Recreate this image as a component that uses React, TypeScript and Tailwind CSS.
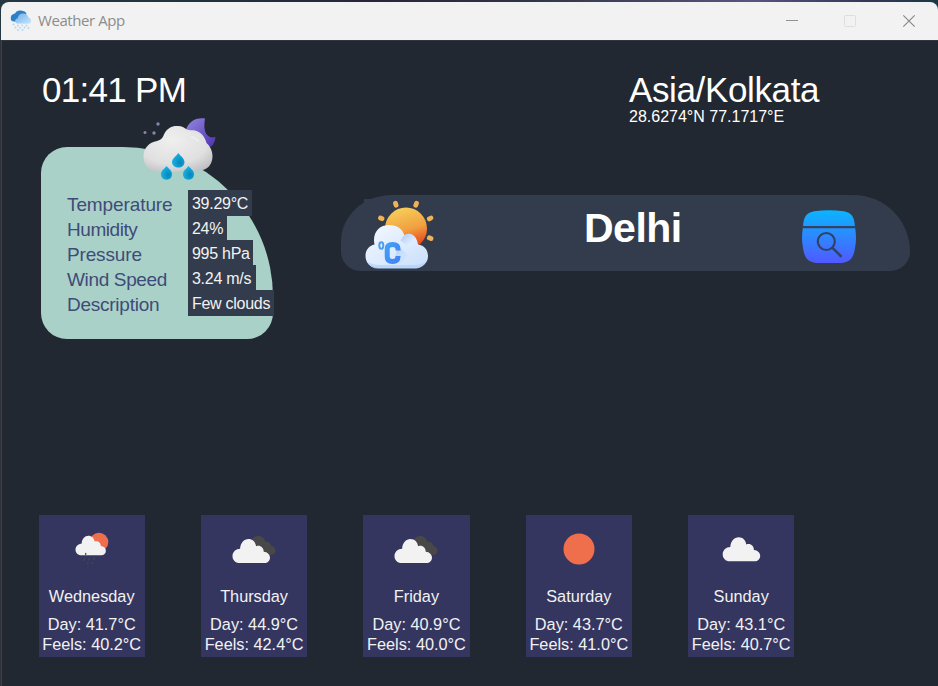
import React from "react";

const readings = [
  { label: "Temperature", value: "39.29°C", width: "w-[64px]", track: "tracking-[-0.1px]" },
  { label: "Humidity", value: "24%", width: "w-[39px]", track: "tracking-[-0.45px]" },
  { label: "Pressure", value: "995 hPa", width: "w-[65px]", track: "tracking-[-0.15px]" },
  { label: "Wind Speed", value: "3.24 m/s", width: "w-[68px]", track: "tracking-[-0.35px]" },
  { label: "Description", value: "Few clouds", width: "w-[86px]", track: "tracking-[-0.25px]" },
];

type Sky = "rain" | "broken" | "clear" | "cloud";

const days: { name: string; sky: Sky; day: string; feels: string }[] = [
  { name: "Wednesday", sky: "rain", day: "41.7", feels: "40.2" },
  { name: "Thursday", sky: "broken", day: "44.9", feels: "42.4" },
  { name: "Friday", sky: "broken", day: "40.9", feels: "40.0" },
  { name: "Saturday", sky: "clear", day: "43.7", feels: "41.0" },
  { name: "Sunday", sky: "cloud", day: "43.1", feels: "40.7" },
];

const CLOUD =
  "M7 24C3 24 0 21 0 17.200C0 12.800 3.500 9.800 7.600 9.800C7.800 4 11.500 0 16 0C20 0 23 2.800 23.600 7.200C27.500 5.500 31.300 8.500 31.200 12.700C35 13 37.500 15.500 37.500 18.500C37.500 22 35 24 32 24Z";

function SkyIcon({ sky }: { sky: Sky }) {
  return (
    <svg className="block h-[66px] w-[106px]" viewBox="0 0 106 66">
      {sky === "rain" && (
        <>
          <circle cx="60" cy="27" r="9.300" fill="#ef6f4d" />
          <path d={CLOUD} transform="translate(36.500 20.700) scale(.81)" fill="#f2f2f2" />
          <g stroke="#45474f" strokeWidth="1.300" strokeLinecap="round">
            <path d="M46.700 38.500v1M45.500 44l-.7 1.300M50.500 43.500l-.7 1.400M55.500 43l-.8 1.500M49 48l-.6 .8M53.500 47.300l-.6 1.300" />
          </g>
        </>
      )}
      {sky === "broken" && (
        <>
          <path
            d="M50 27C51 23 54 20.500 58 21C61.500 21.300 64 24 64.500 27C68 25.800 70 28.500 70 31C73 31 74.500 33.500 74.500 36C74.500 38.500 72.500 40 69 40L60 38Z"
            fill="#484848"
          />
          <path d={CLOUD} transform="translate(31.500 24)" fill="#f2f2f2" />
        </>
      )}
      {sky === "clear" && <circle cx="53" cy="34" r="15.500" fill="#ef6f4d" />}
      {sky === "cloud" && <path d={CLOUD} transform="translate(34.700 22.300)" fill="#f2f2f2" />}
    </svg>
  );
}

function AppIcon() {
  return (
    <svg className="mt-[-1px] h-[22px] w-[22px]" viewBox="0 0 22 22">
      <defs>
        <linearGradient id="appCloud" x1="0" y1="0" x2="1" y2="1">
          <stop offset="0" stopColor="#6fb0ec" />
          <stop offset="1" stopColor="#c9e6ff" />
        </linearGradient>
      </defs>
      <path d="M4 11.500C1.500 11.500 .5 10 .8 7.500C1 5 2.800 3.800 5 3.500C6 1 8.500 .2 11 .6C14 1 16 2 16.500 4L10 12Z" fill="#2f7fc4" />
      <path d="M7 13.500C4.500 13 4.500 9 7.500 8.600C8 4.800 11 3 14 3.600C17 4.200 18 5.500 18.300 7.500C20.500 8 21 9.500 21 11C21 13 19.500 13.800 17.500 13.800Z" fill="url(#appCloud)" />
      <g fill="#aed5f3">
        <circle cx="3.500" cy="14.500" r=".9" /><circle cx="8" cy="15.500" r=".9" /><circle cx="12" cy="15.300" r=".9" /><circle cx="16.500" cy="15.500" r=".9" />
        <circle cx="5.500" cy="17.500" r=".9" /><circle cx="10" cy="17.800" r=".9" /><circle cx="14.500" cy="17.500" r=".9" /><circle cx="18.500" cy="18" r=".9" />
        <circle cx="8" cy="20" r=".9" /><circle cx="12.500" cy="20" r=".9" />
      </g>
    </svg>
  );
}

function NightRain() {
  return (
    <svg className="absolute left-[94px] top-[-37px] h-[80px] w-[90px]" viewBox="0 0 90 80">
      <defs>
        <radialGradient id="puff" cx=".42" cy=".3" r=".8">
          <stop offset="0" stopColor="#efefef" />
          <stop offset=".65" stopColor="#e0e0e1" />
          <stop offset="1" stopColor="#bcbbbe" />
        </radialGradient>
        <linearGradient id="moon" x1="0" y1="0" x2="1" y2="1">
          <stop offset="0" stopColor="#9488e0" />
          <stop offset="1" stopColor="#4f32b0" />
        </linearGradient>
        <radialGradient id="drop" cx=".65" cy=".65" r=".7">
          <stop offset="0" stopColor="#0785bd" />
          <stop offset="1" stopColor="#18b7e4" />
        </radialGradient>
      </defs>
      <g fill="#8b83ad">
        <circle cx="23" cy="14" r="1.700" /><circle cx="10" cy="22.500" r="1.500" /><circle cx="19" cy="23" r="1.700" />
      </g>
      <path d="M51 20C53 12 61 7 70 8.500C69 15 69 20 71 23.500C73.500 27.500 77 28 80.500 27C80 31 79 34 76.500 36.500L70 36L60 30Z" fill="url(#moon)" />
      <path
        d="M22 61.500C14 61.500 8.500 55 8.500 46.500C8.500 38 14 32.500 22 31C28 29.500 28 26 30 22.500C33 18 37 15.500 43 16C47 16.200 49 17.500 52 19.500C54 20.500 57 20 60 20.500C66 22 70 27 71.500 33C75 36 77.500 41 77.500 46C77.500 55 72 60.500 64 60.500C56 61 52 59.500 47 60.500C39 62.500 31 63 22 61.500Z"
        fill="url(#puff)"
      />
      <path d="M57 27Q61 28 63 31" fill="none" stroke="#f4f4f4" strokeWidth="2" strokeLinecap="round" opacity=".6" />
      <g fill="url(#drop)">
        <path d="M43.300 43C45.500 46 49.500 48.500 49.500 52C49.500 55.500 47 57.500 43.500 57.500C40 57.500 37 55.500 37 52C37 48.500 41.500 46 43.300 43Z" />
        <path d="M31.500 56C33.500 58.500 37 60.500 37 64C37 67.500 35 69.700 31.500 69.700C28 69.700 26 67.500 26 64C26 60.500 29.500 59 31.500 56Z" />
        <path d="M53.500 56C55.500 58.500 59 60.500 59 64C59 67.500 57 69.700 53.500 69.700C50 69.700 48 67.500 48 64C48 60.500 51.500 59 53.500 56Z" />
      </g>
    </svg>
  );
}

function SunCelsius() {
  return (
    <svg className="h-[76px] w-[83px]" viewBox="0 0 83 76">
      <defs>
        <linearGradient id="sun" x1=".3" y1="0" x2=".6" y2="1">
          <stop offset="0" stopColor="#f8cf5a" />
          <stop offset=".55" stopColor="#f0a040" />
          <stop offset=".95" stopColor="#e8451c" />
        </linearGradient>
        <linearGradient id="cloudA" x1="0" y1="0" x2="1" y2="1">
          <stop offset="0" stopColor="#f5f9ff" />
          <stop offset="1" stopColor="#c8dffc" />
        </linearGradient>
        <linearGradient id="cloudB" x1="0" y1="0" x2="1" y2="1">
          <stop offset="0" stopColor="#a9c9f5" />
          <stop offset=".6" stopColor="#dcebff" />
        </linearGradient>
        <linearGradient id="shade" x1="0" y1="0" x2="1" y2="1">
          <stop offset="0" stopColor="#9dbfe9" stopOpacity=".8" />
          <stop offset="1" stopColor="#c8dffc" stopOpacity="0" />
        </linearGradient>
        <linearGradient id="cel" x1="0" y1="0" x2="1" y2="1">
          <stop offset="0" stopColor="#429ff8" />
          <stop offset="1" stopColor="#4382f5" />
        </linearGradient>
      </defs>
      {/* square corner of the icon tile showing past the rounded bar */}
      <path d="M0 4H22Q12 7 0 13Z" fill="#333c4c" />
      <g stroke="#eeb257" strokeWidth="4.800" strokeLinecap="round">
        <path d="M31.500 8.300l.6 2M52.500 8.300l-.7 2M16.500 23l1.500.7M67 23l-1.700 .9M67 43.500l-1.700-.7" />
      </g>
      <circle cx="42" cy="33.500" r="21" fill="url(#sun)" />
      <path
        d="M14 73C6 73 1.500 67.500 1.500 61C1.500 55 5 50.500 10.500 49.500C8 38 15 30 25 30C33 30 38.500 34 40.500 40.500C46 36.500 53 41 54 49.500C60 50 64 55 64 61C64 67 60 71 54 73Z"
        fill="url(#cloudA)"
      />
      <path d="M36.500 46Q39 39 45 38.500Q53 40 53 50Q47 50 43.500 54Q42 48 36.500 46Z" fill="url(#cloudB)" />
      <path d="M34 51L44 60L37 69L30 67Z" fill="url(#shade)" />
      <path d="M3 66Q6 73.500 14 73.800H52Q60 72 62.500 66Q60 69 52 70H14Q6 69 3 66Z" fill="#b0cefa" opacity=".7" />
      <ellipse cx="17.300" cy="50.500" rx="2" ry="3.200" fill="none" stroke="#4d9df3" strokeWidth="2" />
      <path d="M34 55.500V54Q34 49.500 28.500 49.500Q23.200 49.500 23.200 54V61.500Q23.200 66.500 28.500 66.500Q34 66.500 34 61.500V61" fill="none" stroke="url(#cel)" strokeWidth="5" />
    </svg>
  );
}

function SearchIcon() {
  return (
    <svg className="block h-[54px] w-[56px]" viewBox="0 0 56 54">
      <defs>
        <linearGradient id="find" x1="0" y1="0" x2="0" y2="1">
          <stop offset="0" stopColor="#0ab5ff" />
          <stop offset="1" stopColor="#5159ff" />
        </linearGradient>
      </defs>
      <path d="M2 17C2.500 6 6 2.800 13 1.300Q28-.8 43 1.300C50 2.800 53.500 6 54 17Q56 29 54 38C52.500 49 48 53 38 53H18C8 53 3.500 49 2 38Q0 28 2 17Z" fill="url(#find)" />
      <g fill="none" stroke="#314265">
        <path d="M1 17.200H55" strokeWidth="2.200" />
        <circle cx="25.300" cy="31.500" r="8.500" strokeWidth="2.200" />
        <path d="M31.500 37.800L39.700 46" strokeWidth="2.500" strokeLinecap="round" />
      </g>
    </svg>
  );
}

export default function App() {
  return (
    <div className="flex h-[686px] w-[938px] flex-col overflow-hidden bg-[#2f3238] font-['Liberation_Sans',Arial,sans-serif]">
      <div className="h-[40px] shrink-0 bg-[linear-gradient(90deg,#253841,#21333d_20%,#28263b_40%,#303344_55%,#57547e_80%,#37375b_92%,#193943)] pl-[1px] pt-[2px]">
        <header className="flex h-[38px] items-center rounded-t-[8px] bg-[#f2f2f2] pl-[9px]">
          <AppIcon />
          <span className="-mt-[2px] ml-[6px] font-['Open_Sans','Noto_Sans',sans-serif] text-[15px] leading-[20px] tracking-[-0.42px] text-[#8c8c8c]">Weather App</span>
          <svg className="ml-auto h-[38px] w-[176px]" viewBox="0 0 176 38" fill="none">
            <path d="M24 18.500h12" stroke="#929292" />
            <rect x="82.500" y="13.500" width="11" height="11" rx="1" stroke="#dedede" />
            <path d="M141.300 13.300l11.400 11.400M152.700 13.300l-11.400 11.400" stroke="#858585" strokeWidth="1.100" />
          </svg>
        </header>
      </div>

      <main className="ml-[1px] flex flex-1 flex-col border-l border-t border-l-[#3b4047] border-t-[#303740] bg-[#222831]">
        <div className="flex h-[474px]">
          <section className="ml-[39px] w-[232px]">
            <h1 className="h-[106px] whitespace-nowrap pl-[1px] pt-[29px] text-[35px] leading-[40px] tracking-[-0.7px] text-white">01:41 PM</h1>
            <div className="relative h-[192px] rounded-[26px_150px_26px_26px] bg-[#a9d1c8] pl-[26px] pt-[43px]">
              <NightRain />
              {readings.map((r) => (
                <div key={r.label} className="flex h-[25px] whitespace-nowrap">
                  <span className={`${r.track} w-[121px] shrink-0 pt-[4px] text-[19px] leading-[22px] text-[#404b78]`}>{r.label}</span>
                  <span className={`${r.width} h-[26px] shrink-0 bg-[#333c4c] pl-[4px] pt-[5px] text-[16px] leading-[18px] tracking-[-0.28px] text-[#f2f2f2]`}>{r.value}</span>
                </div>
              ))}
            </div>
          </section>

          <section className="ml-[68px] w-[569px]">
            <div className="h-[154px] pl-[288px] pt-[29px] text-white">
              <h2 className="text-[35px] leading-[40px] tracking-[-0.37px]">Asia/Kolkata</h2>
              <p className="-mt-[2px] text-[16px] leading-[18px]">28.6274°N 77.1717°E</p>
            </div>
            <div className="flex h-[76px] rounded-[52px_58px_20px_20px/48px_58px_20px_20px] bg-[#333c4c] pl-[23px]">
              <SunCelsius />
              <span className="ml-[137px] w-[100px] pt-[10px] text-[41px] font-bold leading-[46px] tracking-[-0.5px] text-white">Delhi</span>
              <button className="ml-[117px] mt-[15px] h-[54px] w-[56px]" aria-label="Search">
                <SearchIcon />
              </button>
            </div>
          </section>
        </div>

        <div className="flex gap-[56.200px] pl-[36.600px]">
          {days.map((d) => (
            <article key={d.name} className="h-[142px] w-[106.200px] whitespace-nowrap bg-[#353660] text-center text-[16.300px] text-[#f2f2f2]">
              <SkyIcon sky={d.sky} />
              <h3 className="mt-[5px] leading-[20px]">{d.name}</h3>
              <p className="mt-[8px] leading-[20px]">Day: {d.day}°C</p>
              <p className="leading-[20px]">Feels: {d.feels}°C</p>
            </article>
          ))}
        </div>
      </main>
    </div>
  );
}
